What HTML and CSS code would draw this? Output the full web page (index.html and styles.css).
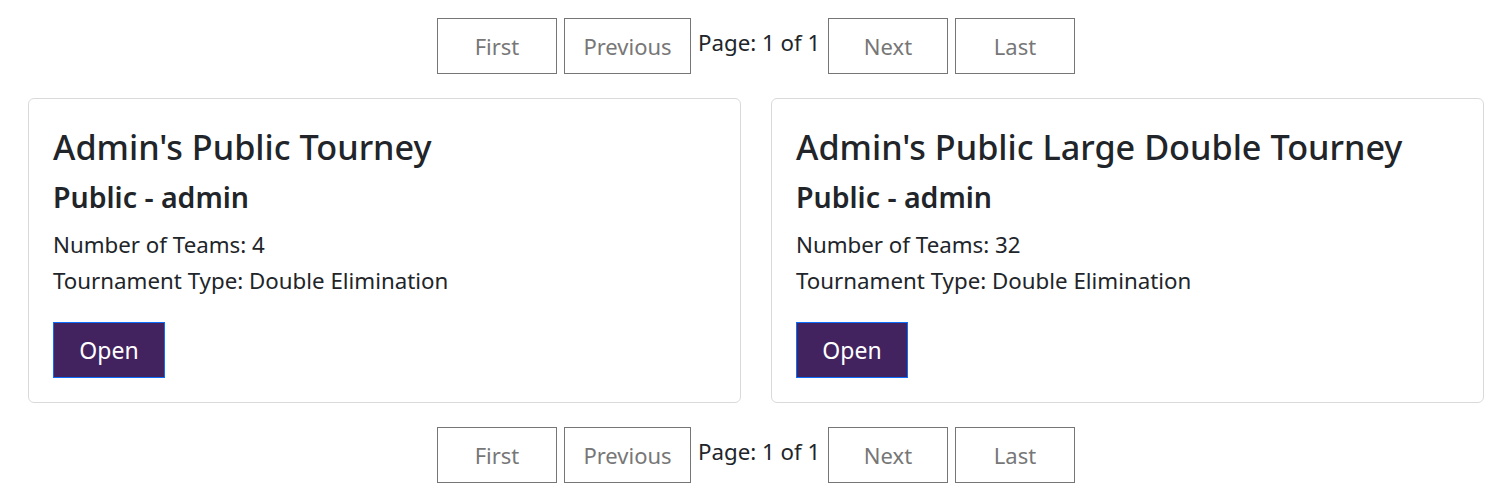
FILE: index.html
```html
<!DOCTYPE html>
<html lang="en">
<head>
<meta charset="utf-8">
<title>Tourneys</title>
<link rel="stylesheet" href="styles.css">
</head>
<body>
<div class="page">
  <nav class="pager">
    <button class="pager-btn">First</button>
    <button class="pager-btn pager-btn-prev">Previous</button>
    <span class="pager-label">Page: 1 of 1</span>
    <button class="pager-btn">Next</button>
    <button class="pager-btn">Last</button>
  </nav>
  <div class="cards">
    <div class="card">
      <h2 class="card-title">Admin's Public Tourney</h2>
      <h3 class="card-subtitle">Public - admin</h3>
      <p class="card-line">Number of Teams: 4</p>
      <p class="card-line">Tournament Type: Double Elimination</p>
      <button class="open-btn">Open</button>
    </div>
    <div class="card">
      <h2 class="card-title">Admin's Public Large Double Tourney</h2>
      <h3 class="card-subtitle">Public - admin</h3>
      <p class="card-line">Number of Teams: 32</p>
      <p class="card-line">Tournament Type: Double Elimination</p>
      <button class="open-btn">Open</button>
    </div>
  </div>
  <nav class="pager">
    <button class="pager-btn">First</button>
    <button class="pager-btn pager-btn-prev">Previous</button>
    <span class="pager-label">Page: 1 of 1</span>
    <button class="pager-btn">Next</button>
    <button class="pager-btn">Last</button>
  </nav>
</div>
</body>
</html>
```
FILE: styles.css
```css
* { box-sizing: border-box; }
html, body { margin: 0; padding: 0; background: #fff; }
body {
  font-family: "Noto Sans", "Open Sans", sans-serif;
  color: #212529;
}
.page {
  padding: 18px 25px 0 28px;
  display: flex;
  flex-direction: column;
  gap: 24px;
}
.pager {
  display: flex;
  justify-content: center;
  align-items: flex-start;
  gap: 7px;
}
.pager-btn {
  flex: none;
  height: 56px;
  width: 120px;
  background: #fff;
  border: 1px solid #767676;
  color: #777;
  font-family: inherit;
  font-size: 22px;
  padding: 0;
}
.pager-btn-prev { width: 127px; }
.pager-label {
  flex: none;
  width: 123px;
  font-size: 22.3px;
  line-height: 22px;
  padding-top: 14px;
  white-space: nowrap;
}
.cards {
  display: grid;
  grid-template-columns: 1fr 1fr;
  gap: 30px;
}
.card {
  border: 1px solid #dadada;
  border-radius: 6px;
  padding: 24px;
}
.card-title {
  margin: 4px 0 0;
  font-size: 34.2px;
  font-weight: 500;
  line-height: 40px;
  white-space: nowrap;
}
.card-subtitle {
  margin: 12px 0 12px;
  font-size: 28.5px;
  font-weight: 600;
  line-height: 36px;
}
.card-line {
  margin: 0;
  font-size: 22.3px;
  line-height: 36px;
}
.open-btn {
  margin-top: 23px;
  width: 112px;
  height: 56px;
  background: #42235f;
  border: 1px solid #0d6efd;
  color: #fff;
  font-family: inherit;
  font-size: 23px;
  padding: 0;
  display: block;
}
```
